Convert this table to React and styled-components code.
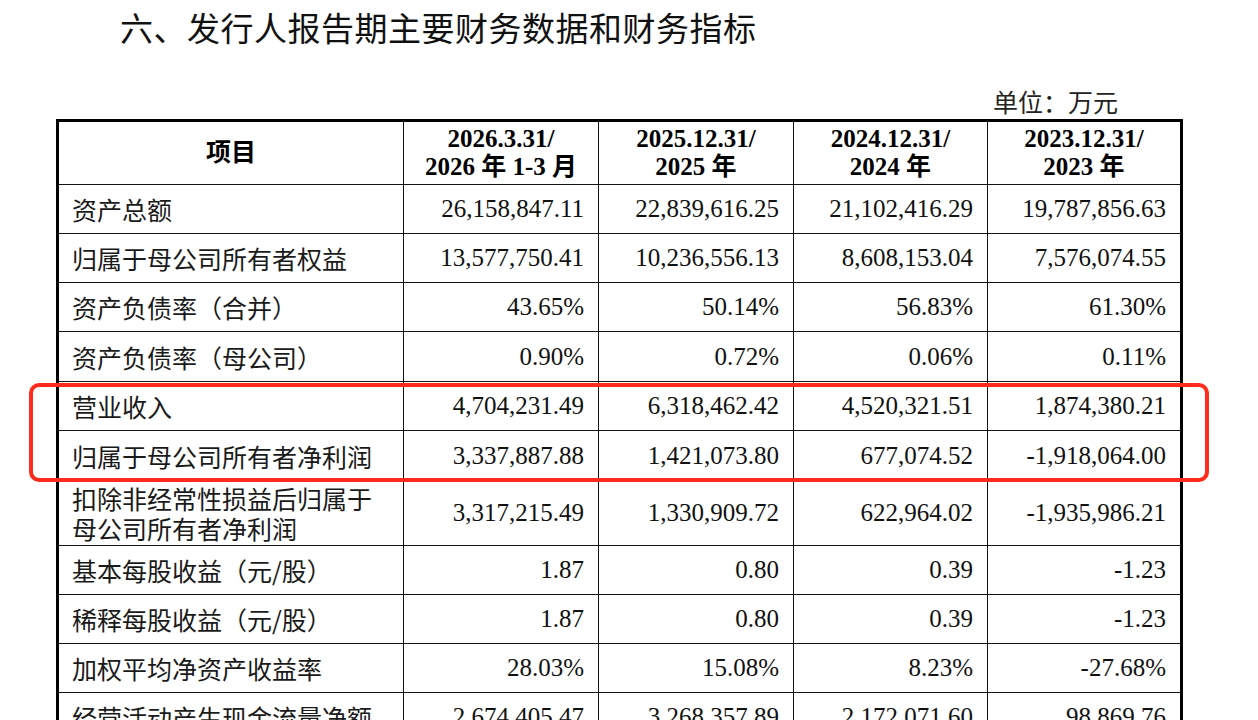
import React from 'react';
import styled, { createGlobalStyle } from 'styled-components';

const GlobalStyle = createGlobalStyle`
  html, body {
    margin: 0;
    padding: 0;
    background: #ffffff;
  }
  body {
    font-family: "Liberation Serif", "Noto Sans CJK SC", serif;
    color: #141414;
  }
`;

const Page = styled.div`
  width: 1258px;
  height: 720px;
  overflow: hidden;
  padding-left: 56px;
  box-sizing: border-box;
`;

const Title = styled.h1`
  margin: 0;
  padding: 7px 0 0 64px;
  font-family: "Noto Sans CJK SC", sans-serif;
  font-weight: 400;
  font-size: 33px;
  line-height: 40px;
  letter-spacing: 0.5px;
  color: #111;
`;

const Unit = styled.div`
  width: 1126px;
  margin-top: 39px;
  padding-right: 64px;
  box-sizing: border-box;
  text-align: right;
  font-family: "Noto Sans CJK SC", sans-serif;
  font-size: 25px;
  line-height: 30px;
  color: #222;
`;

const TableWrap = styled.div`
  position: relative;
  width: 1126px;
  margin-top: 3px;
`;

const Table = styled.table`
  width: 100%;
  border-collapse: collapse;
  table-layout: fixed;
  border: 3px solid #000;
`;

const Th = styled.th`
  height: 62px;
  padding: 0;
  border: 1.5px solid #111;
  font-family: "Liberation Serif", "Noto Sans CJK SC", serif;
  font-weight: 700;
  font-size: 25px;
  line-height: 28px;
  text-align: center;
  vertical-align: middle;
  color: #000;
`;

const Row = styled.tr`
  height: ${p => p.$h}px;
`;

const Label = styled.td`
  padding: 0 0 0 13px;
  border: 1.5px solid #111;
  font-family: "Noto Sans CJK SC", sans-serif;
  font-size: 25px;
  line-height: 30px;
  text-align: left;
  vertical-align: middle;
  white-space: nowrap;
  color: #1a1a1a;
`;

const Num = styled.td`
  padding: 0 14px 0 0;
  border: 1.5px solid #111;
  font-family: "Liberation Serif", serif;
  font-size: 25px;
  line-height: 30px;
  text-align: right;
  vertical-align: middle;
  white-space: nowrap;
  color: #111;
`;

const Highlight = styled.div`
  position: absolute;
  left: -27px;
  top: 264px;
  width: 1180px;
  height: 99px;
  box-sizing: border-box;
  border: 4px solid #ff2b1c;
  border-radius: 10px;
  pointer-events: none;
`;

const columns = [
  ['2026.3.31/', '2026 年 1-3 月'],
  ['2025.12.31/', '2025 年'],
  ['2024.12.31/', '2024 年'],
  ['2023.12.31/', '2023 年'],
];

const rows = [
  { label: ['资产总额'], h: 49, values: ['26,158,847.11', '22,839,616.25', '21,102,416.29', '19,787,856.63'] },
  { label: ['归属于母公司所有者权益'], h: 49, values: ['13,577,750.41', '10,236,556.13', '8,608,153.04', '7,576,074.55'] },
  { label: ['资产负债率（合并）'], h: 49, values: ['43.65%', '50.14%', '56.83%', '61.30%'] },
  { label: ['资产负债率（母公司）'], h: 50, values: ['0.90%', '0.72%', '0.06%', '0.11%'] },
  { label: ['营业收入'], h: 49, values: ['4,704,231.49', '6,318,462.42', '4,520,321.51', '1,874,380.21'] },
  { label: ['归属于母公司所有者净利润'], h: 50, values: ['3,337,887.88', '1,421,073.80', '677,074.52', '-1,918,064.00'] },
  { label: ['扣除非经常性损益后归属于', '母公司所有者净利润'], h: 65, values: ['3,317,215.49', '1,330,909.72', '622,964.02', '-1,935,986.21'] },
  { label: ['基本每股收益（元/股）'], h: 49, values: ['1.87', '0.80', '0.39', '-1.23'] },
  { label: ['稀释每股收益（元/股）'], h: 49, values: ['1.87', '0.80', '0.39', '-1.23'] },
  { label: ['加权平均净资产收益率'], h: 49, values: ['28.03%', '15.08%', '8.23%', '-27.68%'] },
  { label: ['经营活动产生现金流量净额'], h: 49, values: ['2,674,405.47', '3,268,357.89', '2,172,071.60', '98,869.76'] },
];

const App = () => {
  return (
    <Page>
      <GlobalStyle />
      <Title>六、发行人报告期主要财务数据和财务指标</Title>
      <Unit>单位：万元</Unit>

      <TableWrap>
        <Table>
          <colgroup>
            <col style={{ width: '346px' }} />
            <col style={{ width: '195px' }} />
            <col style={{ width: '195px' }} />
            <col style={{ width: '194px' }} />
            <col style={{ width: '194px' }} />
          </colgroup>
          <thead>
            <tr>
              <Th>项目</Th>
              {columns.map(c => (
                <Th key={c[0]}>
                  {c[0]}
                  <br />
                  {c[1]}
                </Th>
              ))}
            </tr>
          </thead>
          <tbody>
            {rows.map(row => (
              <Row key={row.label.join('')} $h={row.h}>
                <Label>
                  {row.label.map((line, i) => (
                    <React.Fragment key={i}>
                      {i > 0 && <br />}
                      {line}
                    </React.Fragment>
                  ))}
                </Label>
                {row.values.map((v, i) => (
                  <Num key={i}>{v}</Num>
                ))}
              </Row>
            ))}
          </tbody>
        </Table>

        {/* red box drawn over 营业收入 / 净利润 rows */}
        <Highlight />
      </TableWrap>
    </Page>
  );
};

export default App;
